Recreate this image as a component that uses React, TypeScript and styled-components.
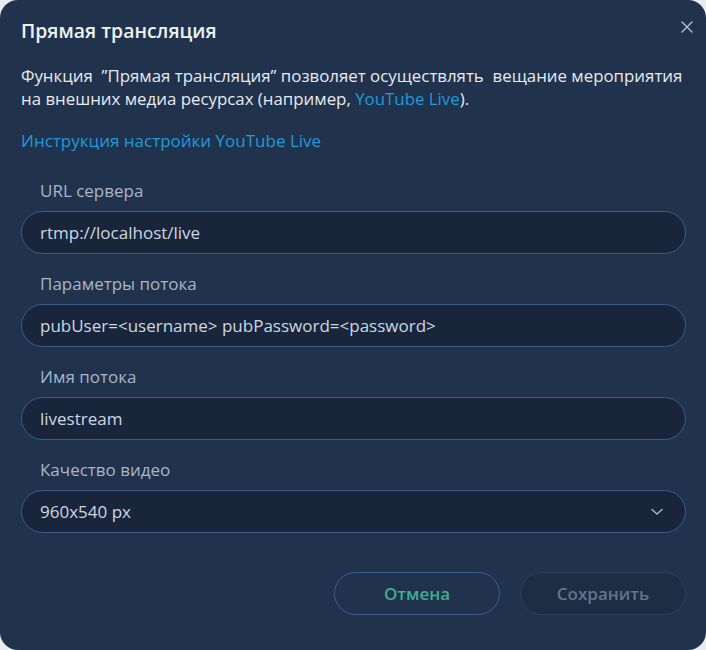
import styled, { createGlobalStyle } from "styled-components";

const GlobalStyle = createGlobalStyle`
  html, body {
    margin: 0;
    padding: 0;
    background: #e9ecef;
  }
  * {
    box-sizing: border-box;
  }
`;

const fields = [
  { label: "URL сервера", value: "rtmp://localhost/live" },
  { label: "Параметры потока", value: "pubUser=<username> pubPassword=<password>" },
  { label: "Имя потока", value: "livestream" },
];

const App = () => {
  return (
    <>
      <GlobalStyle />
      <Dialog>
        <Header>
          <Title>Прямая трансляция</Title>
          <CloseButton aria-label="close">
            <svg width="12" height="12" viewBox="0 0 12 12">
              <path d="M1 1L11 11M11 1L1 11" stroke="#b4c1d0" strokeWidth="1.4" strokeLinecap="round" />
            </svg>
          </CloseButton>
        </Header>
        <Description>
          Функция&nbsp; ”Прямая трансляция” позволяет осуществлять&nbsp; вещание мероприятия на внешних
          медиа ресурсах (например, <Link>YouTube Live</Link>).
        </Description>
        <GuideLink>Инструкция настройки YouTube Live</GuideLink>
        <Form>
          {fields.map((f) => (
            <Field key={f.label}>
              <Label>{f.label}</Label>
              <Input>{f.value}</Input>
            </Field>
          ))}
          <Field>
            <Label>Качество видео</Label>
            <Input>
              <span>960x540 px</span>
              <svg width="12" height="8" viewBox="0 0 12 8">
                <path d="M1 1.5L6 6L11 1.5" stroke="#aebccc" strokeWidth="1.4" fill="none" strokeLinecap="round" strokeLinejoin="round" />
              </svg>
            </Input>
          </Field>
        </Form>
        <Footer>
          <Button variant="cancel">Отмена</Button>
          <Button variant="disabled">Сохранить</Button>
        </Footer>
      </Dialog>
    </>
  );
};

const Dialog = styled.div`
  width: 706px;
  height: 650px;
  background: #21324c;
  border-radius: 18px;
  padding: 17px 20px 35px 21px;
  display: flex;
  flex-direction: column;
  font-family: "Open Sans", "Noto Sans", sans-serif;
  color: #e6ebf1;
`;

const Header = styled.div`
  display: flex;
  align-items: center;
  justify-content: space-between;
  height: 28px;
`;

const Title = styled.h1`
  margin: 0;
  font-size: 19.4px;
  font-weight: 600;
  line-height: 28px;
  color: #eef2f6;
`;

const CloseButton = styled.div`
  display: flex;
  align-items: center;
  justify-content: center;
  width: 16px;
  height: 16px;
  margin-top: -9px;
  margin-right: -9px;
`;

const Description = styled.p`
  margin: 19px -6px 0 0;
  font-size: 16.85px;
  line-height: 23px;
  color: #e6ebf1;
`;

const Link = styled.span`
  color: #1f9ad8;
`;

const GuideLink = styled.div`
  margin-top: 19px;
  font-size: 17px;
  line-height: 23px;
  color: #1f9ad8;
`;

const Form = styled.div`
  margin-top: 27px;
  display: flex;
  flex-direction: column;
  gap: 18px;
`;

const Field = styled.div`
  display: flex;
  flex-direction: column;
  gap: 9px;
`;

const Label = styled.div`
  padding-left: 19px;
  font-size: 17px;
  line-height: 23px;
  color: #a7b6c8;
`;

const Input = styled.div`
  height: 43px;
  border: 1px solid #3a5e8c;
  border-radius: 22px;
  background: #18253a;
  padding: 0 22px 0 18px;
  display: flex;
  align-items: center;
  justify-content: space-between;
  font-size: 17px;
  color: #cdd7e2;
`;

const Footer = styled.div`
  margin-top: auto;
  display: flex;
  justify-content: flex-end;
  gap: 20px;
`;

const Button = styled.div<{ variant: "cancel" | "disabled" }>`
  width: 166px;
  height: 43px;
  border-radius: 22px;
  display: flex;
  align-items: center;
  justify-content: center;
  font-size: 17px;
  font-weight: 600;
  border: 1px solid ${(p) => (p.variant === "cancel" ? "#3a5f8f" : "#2d4059")};
  background: ${(p) => (p.variant === "cancel" ? "transparent" : "#1d2d44")};
  color: ${(p) => (p.variant === "cancel" ? "#3fae8e" : "#60768f")};
`;

export default App;
